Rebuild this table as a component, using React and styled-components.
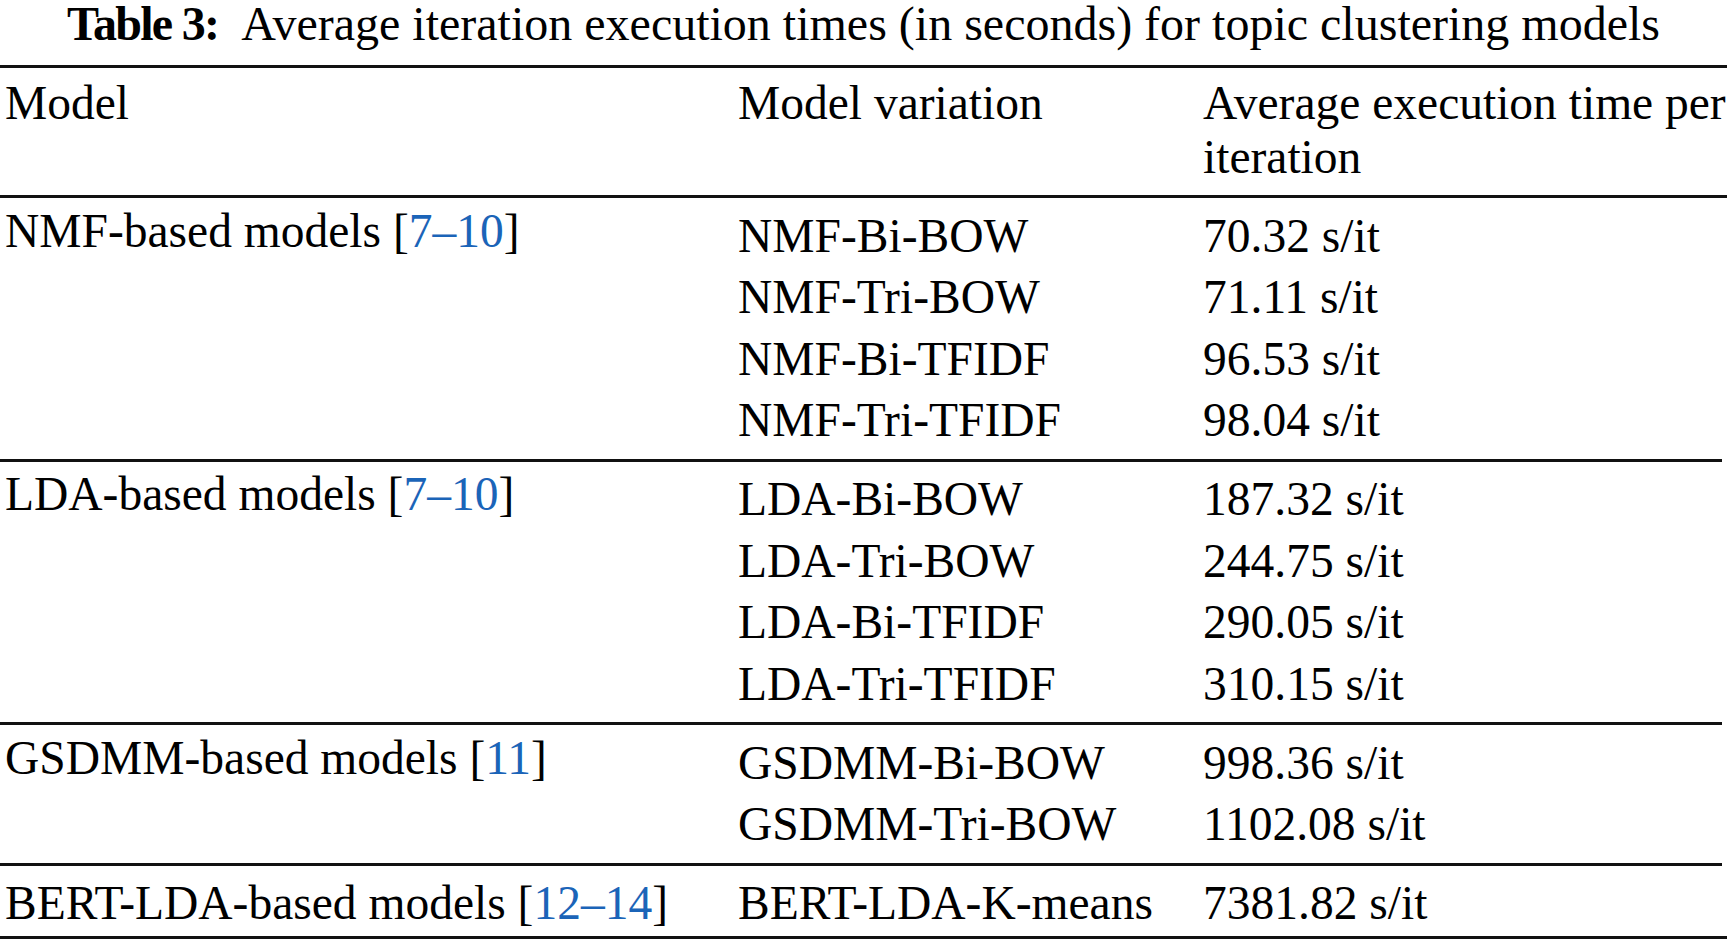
import styled, { createGlobalStyle, css } from "styled-components";

const GlobalStyle = createGlobalStyle`
    html, body {
        margin: 0;
        padding: 0;
        background: #fff;
    }
    body {
        font-family: "Liberation Serif", "Times New Roman", serif;
        color: #000;
    }
`;

const columns = css`
    display: grid;
    grid-template-columns: 733px 465px 1fr;
    padding-left: 5px;
`;

const Page = styled.div`
    width: 1727px;
    font-size: 47.5px;
`;

const Caption = styled.div`
    text-align: center;
    font-size: 48px;
    line-height: 48px;
    margin-bottom: 17px;
    white-space: nowrap;
`;

const Label = styled.b`
    font-weight: 700;
    letter-spacing: -1.7px;
    margin-right: 23px;
`;

const Rule = styled.div`
    height: 3px;
    background: #111;
    margin-right: ${p => (p.$short ? "5px" : "0")};
`;

const HeaderRow = styled.div`
    ${columns};
    line-height: 54px;
    padding-top: 8px;
    padding-bottom: 11px;
`;

const Group = styled.div`
    ${columns};
    line-height: 61.5px;
    padding-top: ${p => (p.$single ? "7.5px" : "7.5px")};
    padding-bottom: ${p => (p.$single ? "1px" : "7px")};
`;

const ModelCell = styled.div`
    margin-top: ${p => (p.$single ? "0" : "-5px")};
    white-space: nowrap;
`;

const Stack = styled.div`
    display: flex;
    flex-direction: column;
    white-space: nowrap;
`;

const Ref = styled.span`
    color: #1b64b8;
`;

const groups = [
    {
        name: "NMF-based models",
        refs: "7–10",
        rows: [
            ["NMF-Bi-BOW", "70.32 s/it"],
            ["NMF-Tri-BOW", "71.11 s/it"],
            ["NMF-Bi-TFIDF", "96.53 s/it"],
            ["NMF-Tri-TFIDF", "98.04 s/it"],
        ],
    },
    {
        name: "LDA-based models",
        refs: "7–10",
        rows: [
            ["LDA-Bi-BOW", "187.32 s/it"],
            ["LDA-Tri-BOW", "244.75 s/it"],
            ["LDA-Bi-TFIDF", "290.05 s/it"],
            ["LDA-Tri-TFIDF", "310.15 s/it"],
        ],
    },
    {
        name: "GSDMM-based models",
        refs: "11",
        rows: [
            ["GSDMM-Bi-BOW", "998.36 s/it"],
            ["GSDMM-Tri-BOW", "1102.08 s/it"],
        ],
    },
    {
        name: "BERT-LDA-based models",
        refs: "12–14",
        rows: [["BERT-LDA-K-means", "7381.82 s/it"]],
    },
];

export default function App() {
    return (
        <Page>
            <GlobalStyle />
            <Caption>
                <Label>Table 3:</Label>Average iteration execution times (in seconds) for topic clustering models
            </Caption>
            <Rule />
            <HeaderRow>
                <div>Model</div>
                <div>Model variation</div>
                <div>
                    Average execution time per
                    <br />
                    iteration
                </div>
            </HeaderRow>
            <Rule />
            {groups.map((g, i) => {
                const single = g.rows.length === 1;
                return (
                    <div key={g.name}>
                        <Group $single={single}>
                            <ModelCell $single={single}>
                                {g.name} [<Ref>{g.refs}</Ref>]
                            </ModelCell>
                            <Stack>
                                {g.rows.map(r => (
                                    <span key={r[0]}>{r[0]}</span>
                                ))}
                            </Stack>
                            <Stack>
                                {g.rows.map(r => (
                                    <span key={r[0]}>{r[1]}</span>
                                ))}
                            </Stack>
                        </Group>
                        <Rule $short={i < groups.length - 1} />
                    </div>
                );
            })}
        </Page>
    );
}
